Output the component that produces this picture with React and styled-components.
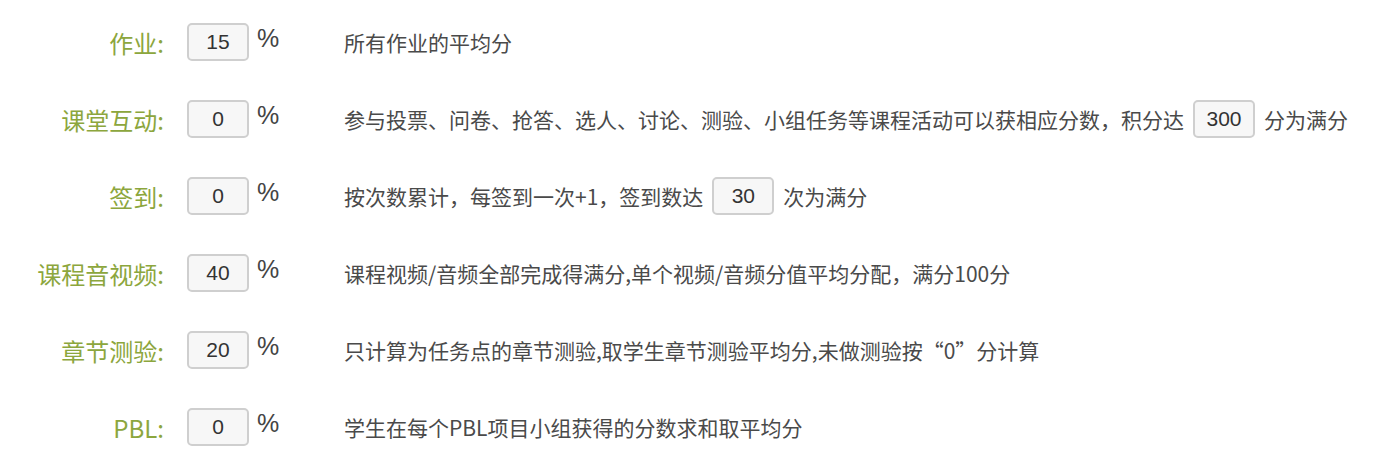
import React from 'react';
import styled, { createGlobalStyle } from 'styled-components';

const GlobalStyle = createGlobalStyle`
  body {
    margin: 0;
    background: #fff;
    font-family: "Noto Sans CJK SC", "Microsoft YaHei", sans-serif;
  }
`;

// Scoring rules
const rules = [
  { label: '作业:', value: '15', desc: ['所有作业的平均分'] },
  {
    label: '课堂互动:',
    value: '0',
    desc: ['参与投票、问卷、抢答、选人、讨论、测验、小组任务等课程活动可以获相应分数，积分达', { input: '300' }, '分为满分'],
  },
  { label: '签到:', value: '0', desc: ['按次数累计，每签到一次+1，签到数达', { input: '30' }, '次为满分'] },
  { label: '课程音视频:', value: '40', desc: ['课程视频/音频全部完成得满分,单个视频/音频分值平均分配，满分100分'] },
  { label: '章节测验:', value: '20', desc: ['只计算为任务点的章节测验,取学生章节测验平均分,未做测验按“0”分计算'] },
  { label: 'PBL:', value: '0', desc: ['学生在每个PBL项目小组获得的分数求和取平均分'] },
];

const Wrapper = styled.div`
  display: flex;
  flex-direction: column;
  gap: 39px;
  padding-top: 23px;
`;

const Row = styled.div`
  display: flex;
  align-items: center;
  height: 38px;
`;

const Label = styled.div`
  width: 164px;
  text-align: right;
  font-size: 24px;
  color: #8ca63d;
  white-space: nowrap;
  flex-shrink: 0;
`;

const NumInput = styled.input`
  box-sizing: border-box;
  width: 62px;
  height: 38px;
  margin-left: ${p => p.$inline ? '9px' : '23px'};
  margin-right: ${p => p.$inline ? '9px' : '0'};
  border: 2px solid #cfcfcf;
  border-radius: 5px;
  background: #f7f7f7;
  font-family: "Liberation Sans", Arial, sans-serif;
  font-size: 21px;
  color: #333;
  text-align: center;
  padding: 0;
  outline: none;
  flex-shrink: 0;
`;

const Percent = styled.span`
  width: 95px;
  padding-left: 8px;
  box-sizing: border-box;
  font-family: "Liberation Sans", Arial, sans-serif;
  font-size: 25px;
  color: #444;
  margin-top: -8px;
  flex-shrink: 0;
`;

const Desc = styled.div`
  display: flex;
  align-items: center;
  font-size: 21px;
  color: #4a4a4a;
  white-space: nowrap;
`;

export default function App() {
  return (
    <>
      <GlobalStyle />
      <Wrapper>
        {rules.map(r => (
          <Row key={r.label}>
            <Label>{r.label}</Label>
            <NumInput defaultValue={r.value} />
            <Percent>%</Percent>
            <Desc>
              {r.desc.map((d, i) =>
                typeof d === 'string'
                  ? <span key={i}>{d}</span>
                  : <NumInput key={i} $inline defaultValue={d.input} />
              )}
            </Desc>
          </Row>
        ))}
      </Wrapper>
    </>
  );
}
